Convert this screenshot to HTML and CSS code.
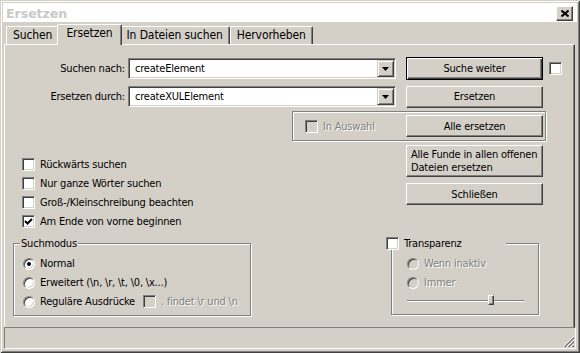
FILE: index.html
```html
<!DOCTYPE html>
<html lang="de">
  <head>
    <meta charset="UTF-8" />
    <title>Ersetzen</title>
    <link rel="stylesheet" href="styles.css">
  </head>
  <body>
    <div class="window">
      <div class="titlebar">
        <span class="title">Ersetzen</span>
        <div class="close-btn">
          <svg width="8" height="7" viewBox="0 0 8 7"><path d="M0.5 0.5L7.5 6.5M7.5 0.5L0.5 6.5" stroke="#000" stroke-width="2"/></svg>
        </div>
      </div>

      <div class="tabs">
        <div class="tab">Suchen</div>
        <div class="tab active">Ersetzen</div>
        <div class="tab">In Dateien suchen</div>
        <div class="tab">Hervorheben</div>
      </div>

      <div class="panel">
        <div class="row">
          <label class="field-label">Suchen nach:</label>
          <div class="combo">
            <span class="combo-text">createElement</span>
            <span class="combo-arrow"><svg width="7" height="4" viewBox="0 0 7 4"><path d="M0 0H7L3.5 4Z" fill="#000"/></svg></span>
          </div>
          <div class="btn default">Suche weiter</div>
          <span class="check"></span>
        </div>
        <div class="row">
          <label class="field-label">Ersetzen durch:</label>
          <div class="combo">
            <span class="combo-text">createXULElement</span>
            <span class="combo-arrow"><svg width="7" height="4" viewBox="0 0 7 4"><path d="M0 0H7L3.5 4Z" fill="#000"/></svg></span>
          </div>
          <div class="btn">Ersetzen</div>
        </div>

        <div class="selection-box">
          <label class="check-label disabled"><span class="check"></span>In Auswahl</label>
          <div class="btn">Alle ersetzen</div>
        </div>

        <div class="options">
          <div class="option-list">
            <label class="check-label"><span class="check"></span>Rückwärts suchen</label>
            <label class="check-label"><span class="check"></span>Nur ganze Wörter suchen</label>
            <label class="check-label"><span class="check"></span>Groß-/Kleinschreibung beachten</label>
            <label class="check-label"><span class="check checked"><svg width="11" height="11" viewBox="0 0 11 11"><path d="M2 5L4.5 7.5L9 3" fill="none" stroke="#000" stroke-width="2"/></svg></span>Am Ende von vorne beginnen</label>
          </div>
          <div class="option-buttons">
            <div class="btn multi">Alle Funde in allen offenen<br>Dateien ersetzen</div>
            <div class="btn">Schließen</div>
          </div>
        </div>

        <div class="groups">
          <fieldset class="group mode">
            <legend>Suchmodus</legend>
            <div class="radio-list">
              <label class="radio-row"><span class="radio checked"></span>Normal</label>
              <label class="radio-row"><span class="radio"></span>Erweitert (\n, \r, \t, \0, \x...)</label>
              <label class="radio-row"><span class="radio"></span>Reguläre Ausdrücke
                <span class="check-label disabled dotall"><span class="check"></span>. findet \r und \n</span>
              </label>
            </div>
          </fieldset>

          <fieldset class="group transparency">
            <legend><span class="check"></span>Transparenz</legend>
            <div class="radio-list">
              <label class="radio-row disabled"><span class="radio"></span>Wenn inaktiv</label>
              <label class="radio-row disabled"><span class="radio"></span>Immer</label>
              <div class="slider">
                <div class="slider-track"></div>
                <div class="slider-thumb"></div>
              </div>
            </div>
          </fieldset>
        </div>
      </div>

      <div class="statusbar">
        <svg class="grip" width="12" height="12" viewBox="0 0 12 12" shape-rendering="crispEdges">
          <path d="M11 0L0 11M11 4L4 11M11 8L8 11" stroke="#fff"/>
          <path d="M11 1L1 11M11 2L2 11M11 5L5 11M11 6L6 11M11 9L9 11M11 10L10 11" stroke="#808080"/>
        </svg>
      </div>
    </div>
  </body>
</html>
```

FILE: styles.css
```css
body {
  margin: 0;
  font-family: "DejaVu Sans Condensed", "Liberation Sans", sans-serif;
  font-size: 11px;
  letter-spacing: -0.2px;
  color: #000;
}
.window {
  width: 580px;
  height: 353px;
  box-sizing: border-box;
  padding: 3px;
  background: #d4d0c8;
  box-shadow: inset 1px 1px #d4d0c8, inset -1px -1px #404040,
    inset 2px 2px #fff, inset -2px -2px #808080;
  display: flex;
  flex-direction: column;
}
.titlebar {
  height: 19px;
  flex-shrink: 0;
  background: #fff;
  display: flex;
  align-items: center;
  justify-content: space-between;
  padding: 0 4px 0 3px;
}
.title {
  font-family: "DejaVu Sans", sans-serif;
  font-weight: bold;
  font-size: 12.5px;
  letter-spacing: 0;
  color: #c8c8c8;
  padding-top: 2px;
}
.close-btn {
  width: 17px;
  height: 15px;
  box-sizing: border-box;
  margin-top: 2px;
  background: #d4d0c8;
  border: 1px solid;
  border-color: #fff #404040 #404040 #fff;
  box-shadow: inset -1px -1px #808080;
  display: flex;
  align-items: center;
  justify-content: center;
}

/* tabs */
.tabs {
  display: flex;
  align-items: flex-end;
  height: 22px;
  flex-shrink: 0;
  padding-left: 3px;
  position: relative;
  z-index: 1;
}
.tab {
  height: 18px;
  box-sizing: border-box;
  padding: 0 6px;
  line-height: 16px;
  font-size: 12px;
  letter-spacing: -0.1px;
  border-left: 1px solid #fff;
  border-top: 1px solid #fff;
  border-right: 1px solid #404040;
  box-shadow: inset -1px 0 #808080;
  border-radius: 2px 2px 0 0;
  background: #d4d0c8;
}
.tab.active {
  height: 21px;
  margin: 0 -2px -1px;
  padding: 0 8px;
  position: relative;
  z-index: 2;
}

/* panel */
.panel {
  margin: 0 2px 0 1px;
  height: 283px;
  flex-shrink: 0;
  box-sizing: border-box;
  border-top: 1px solid #fff;
  border-left: 1px solid #fff;
  border-right: 1px solid #404040;
  box-shadow: inset -1px 0 #808080;
  padding-top: 12px;
}
.row {
  display: flex;
  align-items: center;
  height: 23px;
}
.row + .row {
  margin-top: 5px;
}
.field-label {
  width: 120px;
  text-align: right;
}
.combo {
  margin-left: 3px;
  width: 268px;
  height: 21px;
  box-sizing: border-box;
  padding: 1px;
  background: #fff;
  border: 1px solid;
  border-color: #808080 #fff #fff #808080;
  box-shadow: inset 1px 1px #404040, inset -1px -1px #d4d0c8;
  display: flex;
  align-items: center;
}
.combo-text {
  flex: 1;
  padding-left: 5px;
}
.combo-arrow {
  width: 17px;
  height: 17px;
  box-sizing: border-box;
  background: #d4d0c8;
  border: 1px solid;
  border-color: #d4d0c8 #404040 #404040 #d4d0c8;
  box-shadow: inset 1px 1px #fff, inset -1px -1px #808080;
  display: flex;
  align-items: center;
  justify-content: center;
}
.btn {
  width: 137px;
  height: 22px;
  box-sizing: border-box;
  background: #d4d0c8;
  border: 1px solid;
  border-color: #fff #404040 #404040 #fff;
  box-shadow: inset -1px -1px #808080;
  display: flex;
  align-items: center;
  justify-content: center;
  white-space: nowrap;
}
.row .btn {
  margin-left: 10px;
}
.btn.default {
  height: 23px;
  border-color: #000;
  box-shadow: inset 1px 1px #fff, inset -1px -1px #404040, inset -2px -2px #808080;
}
.btn.multi {
  height: 32px;
  justify-content: flex-start;
  padding-left: 4px;
  line-height: 13px;
}
.row .check {
  margin-left: 6px;
}

/* checkboxes and radios */
.check {
  width: 13px;
  height: 13px;
  box-sizing: border-box;
  flex-shrink: 0;
  background: #fff;
  border: 1px solid;
  border-color: #808080 #fff #fff #808080;
  box-shadow: inset 1px 1px #404040, inset -1px -1px #d4d0c8;
  display: flex;
  align-items: center;
  justify-content: center;
}
.check-label {
  display: flex;
  align-items: center;
  gap: 5px;
  height: 19px;
}
.disabled {
  color: #808080;
  text-shadow: 1px 1px #fff;
}
.disabled .check,
.disabled .radio {
  background: #d4d0c8;
}
.radio {
  width: 12px;
  height: 12px;
  box-sizing: border-box;
  flex-shrink: 0;
  border-radius: 50%;
  background: #fff;
  border: 1px solid;
  border-color: #808080 #fff #fff #808080;
  box-shadow: inset 1px 1px #404040, inset -1px -1px #d4d0c8;
  display: flex;
  align-items: center;
  justify-content: center;
}
.radio.checked::after {
  content: "";
  width: 4px;
  height: 4px;
  border-radius: 50%;
  background: #000;
}
.radio-row {
  display: flex;
  align-items: center;
  gap: 5px;
  height: 19px;
}

.selection-box {
  margin: 3px 0 0 287px;
  width: 254px;
  height: 30px;
  box-sizing: border-box;
  border: 1px solid #808080;
  box-shadow: inset 1px 1px #fff, 1px 1px #fff;
  display: flex;
  align-items: center;
  padding: 0 2px 0 12px;
}
.selection-box .btn {
  margin-left: auto;
}

.options {
  display: flex;
  margin-top: 4px;
}
.option-list {
  margin: 10px 0 0 17px;
}
.option-buttons {
  margin: 0 31px 0 auto;
  display: flex;
  flex-direction: column;
  gap: 6px;
}

/* group boxes */
.groups {
  display: flex;
  align-items: flex-start;
  margin-top: 6px;
}
.group {
  margin: 0;
  min-width: 0;
  box-sizing: border-box;
  border: 1px solid #808080;
  box-shadow: inset 1px 1px #fff, 1px 1px #fff;
  padding: 0 0 4px 6px;
}
.group legend {
  padding: 0 1px;
  line-height: 13px;
  background: #d4d0c8;
}
.radio-list {
  padding-top: 4px;
}
.mode {
  margin-left: 8px;
  width: 238px;
}
.mode .radio-row {
  margin-left: 3px;
}
.dotall {
  margin-left: 3px;
}
.transparency {
  margin-left: 140px;
  width: 148px;
  padding: 0 0 5px 15px;
}
.transparency legend {
  margin-left: -21px;
  padding: 0 44px 0 0;
  display: flex;
  align-items: center;
  gap: 5px;
}
.slider {
  position: relative;
  width: 117px;
  height: 17px;
  display: flex;
  align-items: center;
}
.slider-track {
  width: 100%;
  height: 2px;
  box-sizing: border-box;
  border-top: 1px solid #808080;
  border-bottom: 1px solid #fff;
}
.slider-thumb {
  position: absolute;
  left: 81px;
  top: 3px;
  width: 6px;
  height: 10px;
  box-sizing: border-box;
  background: #d4d0c8;
  border: 1px solid;
  border-color: #fff #404040 #404040 #fff;
  box-shadow: inset -1px -1px #808080;
}

.statusbar {
  height: 22px;
  flex-shrink: 0;
  margin: 0 1px;
  box-sizing: border-box;
  border: 1px solid;
  border-color: #808080 #fff #fff #808080;
  display: flex;
  justify-content: flex-end;
  align-items: flex-end;
}
```
